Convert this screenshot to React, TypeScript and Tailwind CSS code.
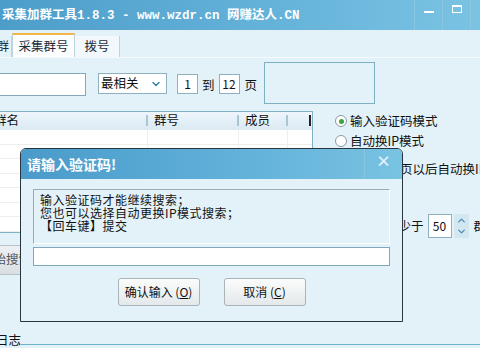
import { ChevronDown, ChevronUp } from "lucide-react";

const CN = { fontFamily: '"Noto Sans CJK SC", "Liberation Sans", sans-serif' };
const MONO = { fontFamily: '"Liberation Mono", monospace' };

function Radio({ label, checked }: { label: string; checked?: boolean }) {
  return (
    <div className="flex items-center gap-[3px] h-[20px]">
      <span className="w-[12px] h-[12px] rounded-full border border-[#8a9aa4] bg-white flex items-center justify-center">
        {checked && <span className="w-[5px] h-[5px] rounded-full bg-[#3aa53a]" />}
      </span>
      <span className="text-[12.5px] text-[#111]">{label}</span>
    </div>
  );
}

function DialogButton({ label, hot }: { label: string; hot: string }) {
  return (
    <button className="w-[82px] h-[28px] rounded-[3px] border border-[#a9b3b8] bg-gradient-to-b from-[#fbfcfc] to-[#e3e8ea] text-[12px] text-[#111] flex items-center justify-center">
      {label} (<span className="underline">{hot}</span>)
    </button>
  );
}

export default function App() {
  return (
    <div className="relative w-[480px] h-[348px] overflow-hidden bg-[#e3f1f8]" style={CN}>
      {/* title bar */}
      <div className="h-[30px] flex items-center bg-gradient-to-r from-[#4d9dca] via-[#62b0d8] to-[#7ac3e3]">
        <p className="ml-[2px] text-[12.5px] font-bold text-white whitespace-nowrap">
          采集加群工具<span className="text-[12.5px]" style={MONO}>1.8.3 - www.wzdr.cn </span>网赚达人<span className="text-[12.5px]" style={MONO}>.CN</span>
        </p>
        <div className="ml-auto flex h-full">
          <div className="w-[28px] h-full border-l border-[#8cc6e0] flex items-start justify-center pt-[11px]">
            <span className="w-[10px] h-[2px] bg-white" />
          </div>
          <div className="w-[28px] h-full border-l border-[#8cc6e0] flex items-start justify-center pt-[5px]">
            <span className="w-[10px] h-[8px] border border-white border-t-2" />
          </div>
          <div className="w-[10px] h-full border-l border-[#8cc6e0]" />
        </div>
      </div>

      {/* tabs */}
      <div className="h-[28px] flex items-end border-b border-[#f4f9fb] text-[12.5px] text-[#1c2c3a]">
        <div className="w-[12px] h-[21px] border-r border-[#bcd4de] flex items-center justify-end pr-[2px] overflow-hidden">
          群
        </div>
        <div className="w-[63px] h-[24px] border-t-2 border-t-[#f2b648] border-x border-x-[#bcd4de] bg-[#fbfdfe] flex items-center justify-center">
          采集群号
        </div>
        <div className="w-[45px] h-[21px] border-r border-[#bcd4de] bg-[#f2f8fb] flex items-center justify-center">
          拨号
        </div>
      </div>

      {/* content */}
      <div className="flex">
        <div className="w-[313px] shrink-0">
          {/* search row */}
          <div className="flex items-start h-[53px] text-[12.5px] text-[#111] whitespace-nowrap">
            <div className="shrink-0 mt-[15px] -ml-[40px] w-[126px] h-[23px] border border-[#7fa8b8] bg-white" />
            <div className="shrink-0 mt-[15px] ml-[12px] w-[69px] h-[21px] border border-[#8eb0bf] bg-white flex items-center pl-[2px]">
              最相关
              <ChevronDown className="ml-auto mr-[4px] w-[12px] h-[12px] text-[#3b7fa8]" strokeWidth={3} />
            </div>
            <div className="shrink-0 mt-[16px] ml-[10px] w-[21px] h-[20px] border border-[#8eb0bf] bg-white flex items-center justify-center text-[12px]">1</div>
            <span className="shrink-0 mt-[18px] ml-[4px]">到</span>
            <div className="shrink-0 mt-[16px] ml-[4px] w-[21px] h-[20px] border border-[#8eb0bf] bg-white flex items-center justify-center text-[12px]">12</div>
            <span className="shrink-0 mt-[18px] ml-[5px]">页</span>
            <div className="shrink-0 mt-[4px] ml-[7px] w-[111px] h-[42px] border border-[#7fb0c2] bg-[#e3f1f8]" />
          </div>

          {/* table */}
          <div className="-ml-[40px] border-y border-r border-[#82b1c3] bg-white">
            <div className="flex h-[18px] items-center bg-gradient-to-b from-[#eef6fb] to-[#dbeaf4] border-b border-[#dfeaf0] text-[12.5px] text-[#111]">
              <div className="w-[188px] pl-[34px] border-r-2 border-[#a8c6d4] h-[11px] flex items-center">群名</div>
              <div className="w-[91px] pl-[6px] border-r-2 border-[#a8c6d4] h-[11px] flex items-center">群号</div>
              <div className="w-[49px] pl-[6px] border-r-2 border-[#a8c6d4] h-[11px] flex items-center">成员</div>
              <div className="w-[23px] border-r-2 border-[#222] h-[11px]" />
            </div>
            {Array.from({ length: 7 }).map((_, i) => (
              <div key={i} className="flex h-[14.5px] border-b border-[#eeeeea]">
                <div className="w-[188px] border-r border-[#eeeeea]" />
                <div className="w-[91px] border-r border-[#eeeeea]" />
                <div className="w-[49px] border-r border-[#eeeeea]" />
              </div>
            ))}
          </div>

          <button className="mt-[12px] -ml-[30px] w-[90px] h-[30px] rounded-[3px] border border-[#b8c2c8] bg-gradient-to-b from-[#eef1f3] to-[#d9dfe2] text-[12.5px] text-[#555] text-left pl-[10px] whitespace-nowrap">
            开始搜索
          </button>
        </div>

        {/* right options */}
        <div className="pl-[22px] pt-[53px] text-[12.5px] text-[#111] whitespace-nowrap">
          <Radio label="输入验证码模式" checked />
          <Radio label="自动换IP模式" />
          <div className="h-[20px] mt-[8px] pl-[65px] flex items-center">页以后自动换IP</div>
          <div className="mt-[34px] pl-[66px] flex items-center h-[26px]">
            <span className="w-[10px] overflow-hidden flex justify-end">少</span>
            <span>于</span>
            <div className="ml-[4px] w-[24px] h-[24px] border border-[#8eb0bf] bg-white flex items-center justify-center text-[12px]">50</div>
            <div className="ml-[2px] w-[15px] h-[24px] bg-[#d3e7f1] flex flex-col items-center justify-center">
              <ChevronUp className="w-[11px] h-[11px] text-[#4a8fb8]" strokeWidth={3} />
              <ChevronDown className="w-[11px] h-[11px] text-[#4a8fb8]" strokeWidth={3} />
            </div>
            <span className="ml-[5px]">群</span>
          </div>
        </div>
      </div>

      {/* log group */}
      <div className="absolute left-0 top-[333px] flex items-end w-full">
        <span className="-ml-[4px] text-[12.5px] text-[#111] leading-[14px]">日志</span>
        <div className="flex-1 h-[1px] bg-[#6cb3cd] mb-[2px]" />
      </div>

      {/* dialog */}
      <div className="absolute left-[20px] top-[148px] w-[383px] h-[174px] border border-[#283640] rounded-t-[6px] bg-[#e3f1f8] overflow-hidden">
        <div className="h-[30px] flex items-center bg-gradient-to-r from-[#4a9bca] via-[#5eaed8] to-[#79c3e2]">
          <p className="ml-[6px] text-[14px] font-bold text-white">请输入验证码!</p>
          <div className="ml-auto w-[38px] h-full border-l border-[#8ac5de] flex items-start justify-center pt-[3px]">
            <span className="text-[15px] font-bold text-[#e8f4fa] leading-[18px]">×</span>
          </div>
        </div>
        <div className="px-[12px] pt-[10px]">
          <div className="h-[55px] border-t border-l border-[#a2a8ab] border-r border-b border-r-white border-b-white pl-[6px] pt-[3px] text-[12px] tracking-[0.5px] leading-[13px] text-[#111]">
            <p>输入验证码才能继续搜索；</p>
            <p>您也可以选择自动更换IP模式搜索；</p>
            <p>【回车键】提交</p>
          </div>
          <div className="mt-[3px] h-[19px] border border-[#7fa9bb] bg-white" />
          <div className="mt-[12px] flex justify-center gap-[24px]">
            <DialogButton label="确认输入" hot="O" />
            <DialogButton label="取消" hot="C" />
          </div>
        </div>
      </div>
    </div>
  );
}
